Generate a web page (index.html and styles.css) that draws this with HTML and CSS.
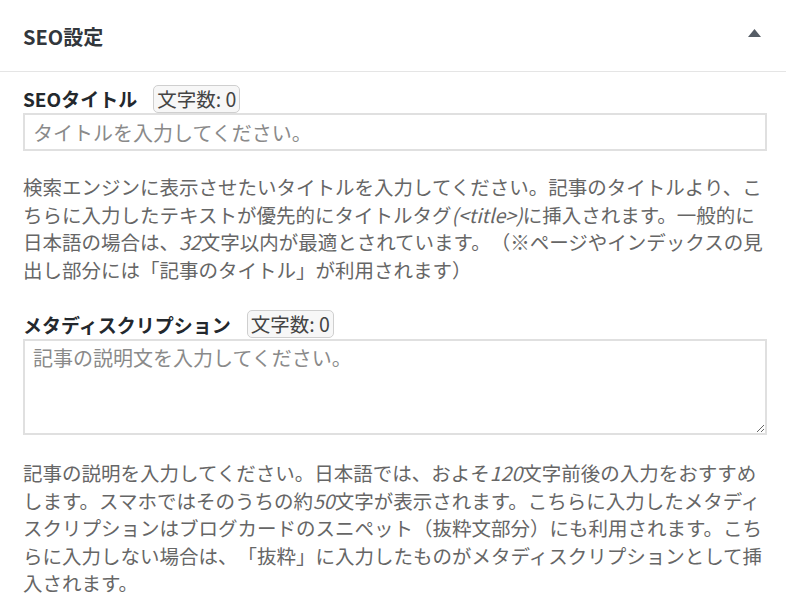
FILE: index.html
```html
<!DOCTYPE html>
<html lang="ja">
<head>
<meta charset="utf-8">
<title>SEO設定</title>
<link rel="stylesheet" href="styles.css">
</head>
<body>
<div class="postbox">
  <div class="hndle">
    <h2 class="hndle-title">SEO設定</h2>
    <svg class="toggle" width="13" height="8" viewBox="0 0 13 8" aria-hidden="true"><polygon points="6.5,0 13,8 0,8" fill="#555d66"/></svg>
  </div>
  <div class="inside">
    <div class="field-head">
      <label class="field-label">SEOタイトル</label>
      <span class="counter">文字数: 0</span>
    </div>
    <input class="text-input" type="text" placeholder="タイトルを入力してください。">
    <p class="desc">検索エンジンに表示させたいタイトルを入力してください。記事のタイトルより、こ<br>ちらに入力したテキストが優先的にタイトルタグ<em>(&lt;title&gt;)</em>に挿入されます。一般的に<br>日本語の場合は、<em>32</em>文字以内が最適とされています。（※ページやインデックスの見<br>出し部分には「記事のタイトル」が利用されます）</p>

    <div class="field-head second">
      <label class="field-label">メタディスクリプション</label>
      <span class="counter">文字数: 0</span>
    </div>
    <textarea class="text-area" placeholder="記事の説明文を入力してください。"></textarea>
    <p class="desc second">記事の説明を入力してください。日本語では、およそ<em>120</em>文字前後の入力をおすすめ<br>します。スマホではそのうちの約<em>50</em>文字が表示されます。こちらに入力したメタディ<br>スクリプションはブログカードのスニペット（抜粋文部分）にも利用されます。こち<br>らに入力しない場合は、「抜粋」に入力したものがメタディスクリプションとして挿<br>入されます。</p>
  </div>
</div>
</body>
</html>
```
FILE: styles.css
```css
html, body {
  margin: 0;
  padding: 0;
  background: #fff;
}

body {
  font-family: "Noto Sans CJK JP", "Noto Sans", sans-serif;
  color: #444;
  text-spacing-trim: space-all;
}

.postbox {
  width: 786px;
}

.hndle {
  height: 71px;
  border-bottom: 1px solid #e5e5e5;
  display: flex;
  align-items: center;
  padding-left: 23px;
}

.hndle-title {
  margin: 0;
  font-size: 20px;
  font-weight: 600;
  color: #32373c;
  line-height: 1;
  padding-top: 3px;
}

.toggle {
  margin-left: auto;
  margin-right: 25px;
  margin-bottom: 6px;
}

.inside {
  padding: 12px 19px 0 23px;
}

.field-head {
  display: flex;
  align-items: center;
  gap: 16px;
  height: 29px;
}

.field-head.second {
  margin-top: 26px;
  height: 30px;
}

.field-label {
  font-size: 19px;
  font-weight: 700;
  color: #23282d;
  line-height: 1;
}

.counter {
  font-size: 19.5px;
  line-height: 26px;
  height: 26px;
  padding: 0 3px;
  border: 1px solid #cfcfcf;
  border-radius: 5px;
  background: #f7f7f7;
  color: #444;
}

.text-input,
.text-area {
  display: block;
  box-sizing: border-box;
  width: 744px;
  margin: 0;
  border: 2px solid #e0e0e0;
  background: #fff;
  font-family: "Noto Sans CJK JP", sans-serif;
  font-size: 20px;
  color: #333;
  outline: none;
  text-spacing-trim: space-all;
}

.text-input {
  height: 38px;
  padding: 0 8px;
}

.text-area {
  height: 96px;
  padding: 3px 8px;
  resize: vertical;
  line-height: 27px;
}

.text-input::placeholder,
.text-area::placeholder {
  color: #8a8a8a;
}

.desc {
  margin: 22px 0 0;
  font-size: 19.5px;
  line-height: 27.5px;
  color: #666;
  white-space: nowrap;
}

.desc.second {
  margin-top: 24px;
}

.desc em {
  font-style: italic;
}
```
